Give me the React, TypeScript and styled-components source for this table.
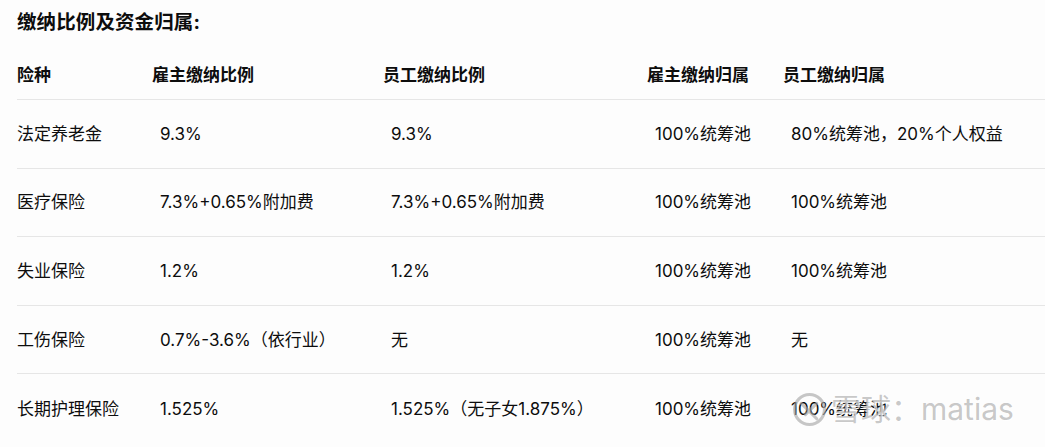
import React from "react";
import styled, { createGlobalStyle } from "styled-components";

const Global = createGlobalStyle`
  html, body { margin: 0; padding: 0; background: #fdfdfd; }
  body {
    font-family: Inter, "Noto Sans CJK SC", sans-serif;
    color: #0d0d0d;
    overflow: hidden;
  }
`;

const Page = styled.div`
  position: relative;
  width: 1045px;
  height: 447px;
  padding: 8px 0 0 17px;
  box-sizing: border-box;
  overflow: hidden;
`;

const Title = styled.h3`
  margin: 0;
  font-size: 19.5px;
  line-height: 28px;
  font-weight: 700;
  letter-spacing: 0.1px;
`;

const Table = styled.div`
  margin-top: 14px;
  width: 1100px;
`;

const Row = styled.div<{ $head?: boolean; $last?: boolean }>`
  display: grid;
  grid-template-columns: 135px 231px 264px 136px 1fr;
  height: ${(p) => (p.$head ? "50px" : "68.6px")};
  align-items: ${(p) => (p.$head ? "start" : "center")};
  padding-top: ${(p) => (p.$head ? "12px" : "0")};
  box-sizing: border-box;
  border-bottom: ${(p) => (p.$last ? "none" : "1px solid #e6e6e6")};
`;

const Cell = styled.div<{ $head?: boolean; $indent?: boolean }>`
  font-size: 17px;
  line-height: 26px;
  font-weight: ${(p) => (p.$head ? 700 : 400)};
  padding-left: ${(p) => (p.$indent ? "8px" : "0")};
  white-space: nowrap;
`;

const Watermark = styled.div`
  position: absolute;
  left: 792px;
  top: 391px;
  display: flex;
  align-items: center;
  gap: 4px;
  color: rgba(165, 165, 165, 0.62);
  font-size: 30px;
  line-height: 36px;
  font-family: Inter, "Noto Sans CJK SC", sans-serif;
  text-shadow: 1px 1px 1px rgba(255, 255, 255, 0.9);
  pointer-events: none;
  white-space: nowrap;
`;

const Logo = () => (
  <svg width="35" height="35" viewBox="0 0 34 34">
    <circle cx="17" cy="17" r="14.5" fill="none" stroke="rgba(165,165,165,0.62)" strokeWidth="3" />
    <path d="M9 11 L24 26 M24 11 L13 22" stroke="rgba(165,165,165,0.62)" strokeWidth="3" fill="none" strokeLinecap="round" />
  </svg>
);

const headers = ["险种", "雇主缴纳比例", "员工缴纳比例", "雇主缴纳归属", "员工缴纳归属"];
const rows = [
  ["法定养老金", "9.3%", "9.3%", "100%统筹池", "80%统筹池，20%个人权益"],
  ["医疗保险", "7.3%+0.65%附加费", "7.3%+0.65%附加费", "100%统筹池", "100%统筹池"],
  ["失业保险", "1.2%", "1.2%", "100%统筹池", "100%统筹池"],
  ["工伤保险", "0.7%-3.6%（依行业）", "无", "100%统筹池", "无"],
  ["长期护理保险", "1.525%", "1.525%（无子女1.875%）", "100%统筹池", "100%统筹池"],
];

export default function App() {
  return (
    <>
      <Global />
      <Page>
        <Title>缴纳比例及资金归属:</Title>
        <Table>
          <Row $head>
            {headers.map((h) => (
              <Cell key={h} $head>
                {h}
              </Cell>
            ))}
          </Row>
          {rows.map((r, i) => (
            <Row key={i} $last={i === rows.length - 1}>
              {r.map((c, j) => (
                <Cell key={j} $indent={j > 0}>
                  {c}
                </Cell>
              ))}
            </Row>
          ))}
        </Table>
        <Watermark>
          <Logo />
          <span>雪球：matias</span>
        </Watermark>
      </Page>
    </>
  );
}
